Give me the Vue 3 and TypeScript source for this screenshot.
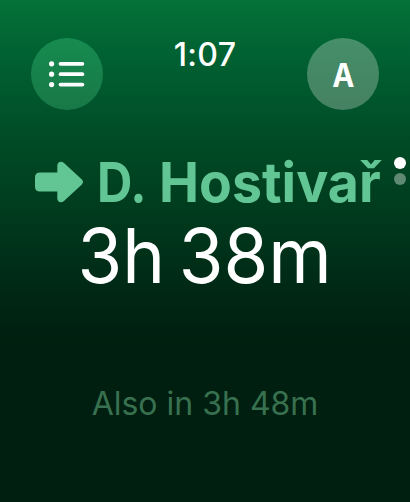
<script setup lang="ts">
const time: string = '1:07'
const badge: string = 'A'
const prefix: string = 'D.'
const district: string = 'Hostivař'
const countdown: string = '3h 38m'
const following: string = 'Also in 3h 48m'
const rows: number[] = [3.8, 14.2, 24.6]
const pages: boolean[] = [true, false]
</script>

<template>
  <main class="watch">
    <header class="bar">
      <button class="round list" aria-label="List">
        <svg width="36" height="28" viewBox="0 0 36 28">
          <g v-for="y in rows" :key="y">
            <circle cx="2.6" :cy="y" r="2.6" fill="#fff" />
            <path :d="`M11.5 ${y}H33.4`" stroke="#fff" stroke-width="3.7" stroke-linecap="round" />
          </g>
        </svg>
      </button>
      <time class="clock">{{ time }}</time>
      <button class="round line"><span class="letter">{{ badge }}</span></button>
    </header>
    <section class="departure">
      <h1 class="heading">
        <svg class="arrow" width="48" height="42" viewBox="0 0 48 42">
          <path
            d="M5 11.6H22.3V4.5C22.3.8 26.2-.4 28.7 1.8L46.6 18.3Q49.4 21 46.6 23.7L28.7 40.2C26.2 42.4 22.3 41.2 22.3 37.5V30.6H5Q0 30.6 0 25.6V16.6Q0 11.6 5 11.6Z"
            fill="#62c594"
          />
        </svg>
        <span class="destination">
          <span class="prefix">{{ prefix }}</span>
          <span class="district">{{ district }}</span>
        </span>
      </h1>
      <p class="countdown"><span class="fit">{{ countdown }}</span></p>
      <p class="following"><span>{{ following }}</span></p>
    </section>
    <nav class="pager" aria-label="Pages">
      <i v-for="(on, n) in pages" :key="n" class="dot" :class="{ on }"></i>
    </nav>
  </main>
</template>

<style>
body {
  background: #001f10;
}
</style>

<style scoped>
.watch {
  position: relative;
  box-sizing: border-box;
  width: 410px;
  height: 502px;
  overflow: hidden;
  font-family: Inter, 'Liberation Sans', sans-serif;
  color: #fff;
  background: linear-gradient(
    180deg,
    #047238 0,
    #016534 40px,
    #00562c 100px,
    #004b26 140px,
    #003e1f 200px,
    #002f18 260px,
    #002413 310px,
    #001f10 345px,
    #001f10 100%
  );
}
.bar {
  display: flex;
  justify-content: space-between;
  align-items: flex-start;
  box-sizing: border-box;
  height: 152px;
  padding: 34px 31px 0;
}
.round {
  display: flex;
  align-items: center;
  justify-content: center;
  width: 72px;
  height: 72px;
  margin: 4px 0 0;
  padding: 0;
  border: 0;
  border-radius: 50%;
  color: #fff;
  font: inherit;
}
.list {
  background: linear-gradient(180deg, #168b50, #187847);
}
.line {
  background: linear-gradient(180deg, #458f69, #458162);
}
.letter {
  font-size: 33px;
  line-height: 40px;
  font-weight: 700;
  transform: translateY(1px) scaleX(0.9);
}
.clock {
  font-size: 32px;
  line-height: 42px;
  font-weight: 500;
  letter-spacing: 0.3px;
}
.heading {
  display: flex;
  align-items: center;
  height: 60px;
  margin: 0 0 4px;
  padding-left: 35px;
}
.arrow {
  flex: none;
}
.destination {
  display: flex;
  margin-left: 14px;
  font-size: 55px;
  line-height: 60px;
  font-weight: 700;
  white-space: nowrap;
  color: #62c594;
}
.prefix {
  width: 62px;
  transform: scaleX(0.89);
  transform-origin: left center;
}
.district {
  transform: scaleX(0.975);
  transform-origin: left center;
}
.countdown,
.following {
  display: flex;
  justify-content: center;
  margin: 0;
  white-space: nowrap;
}
.countdown {
  font-size: 75px;
  line-height: 80px;
  word-spacing: -7px;
}
.fit {
  transform: scaleX(0.966);
}
.following {
  margin-top: 87px;
  font-size: 32px;
  line-height: 42px;
  color: #38714f;
}
.pager {
  position: absolute;
  top: 157px;
  right: 4px;
  display: grid;
  gap: 4px;
}
.dot {
  width: 12px;
  height: 12px;
  border-radius: 50%;
  background: #5f8973;
}
.dot.on {
  background: #fff;
}
</style>
